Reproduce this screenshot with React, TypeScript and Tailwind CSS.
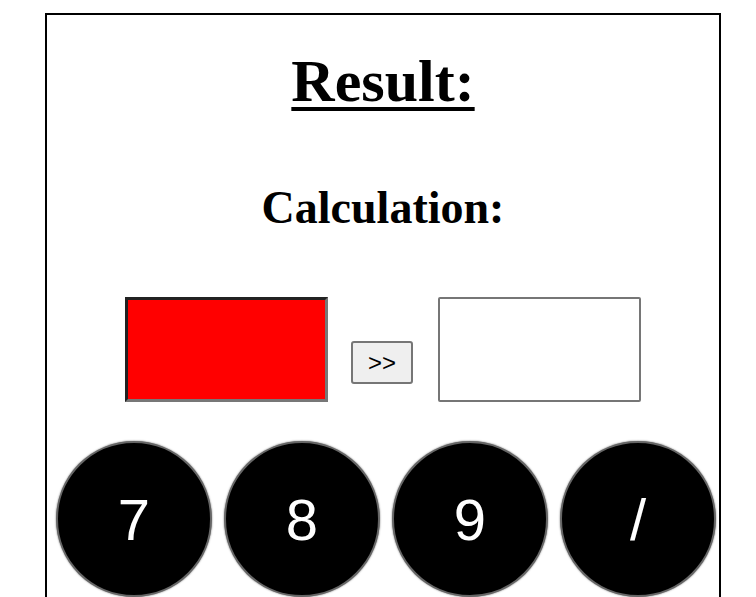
import React from "react";

const keys = ["7", "8", "9", "/"];

const App = () => {
  return (
    <div className="w-[756px] h-[597px] overflow-hidden bg-white pt-[13px] pl-[45px]">
      <div className="w-[676px] h-[620px] border-2 border-black flex flex-col items-center">
        <h1 className="mt-[32px] text-[60px] leading-[69px] font-bold text-black underline decoration-[4px] underline-offset-[6px] font-['Liberation_Serif',serif]">
          Result:
        </h1>
        <h2 className="mt-[65px] text-[46px] leading-[53px] font-bold text-black font-['Liberation_Serif',serif]">
          Calculation:
        </h2>

        <div className="mt-[63px] flex items-end">
          <div className="w-[203px] h-[105px] bg-[#ff0000] border-[3px] border-t-[#222] border-l-[#222] border-b-[#777] border-r-[#777]" />
          <button className="ml-[23px] mb-[18px] w-[62px] h-[43px] rounded-[3px] border-2 border-[#767676] bg-[#efefef] text-[24px] leading-none text-black flex items-center justify-center font-['Liberation_Sans',sans-serif]">
            &gt;&gt;
          </button>
          <div className="ml-[25px] w-[203px] h-[105px] bg-white border-2 border-[#767676] rounded-[2px]" />
        </div>

        <div className="mt-[39px] self-stretch flex gap-[12px] pl-[9px]">
          {keys.map((k) => (
            <button
              key={k}
              className="w-[156px] h-[156px] shrink-0 rounded-full bg-black border-2 border-[#666] shadow-[0_0_2px_rgba(0,0,0,0.6)] text-white text-[58px] flex items-center justify-center font-['Liberation_Sans',sans-serif]"
            >
              {k}
            </button>
          ))}
        </div>
      </div>
    </div>
  );
};

export default App;
